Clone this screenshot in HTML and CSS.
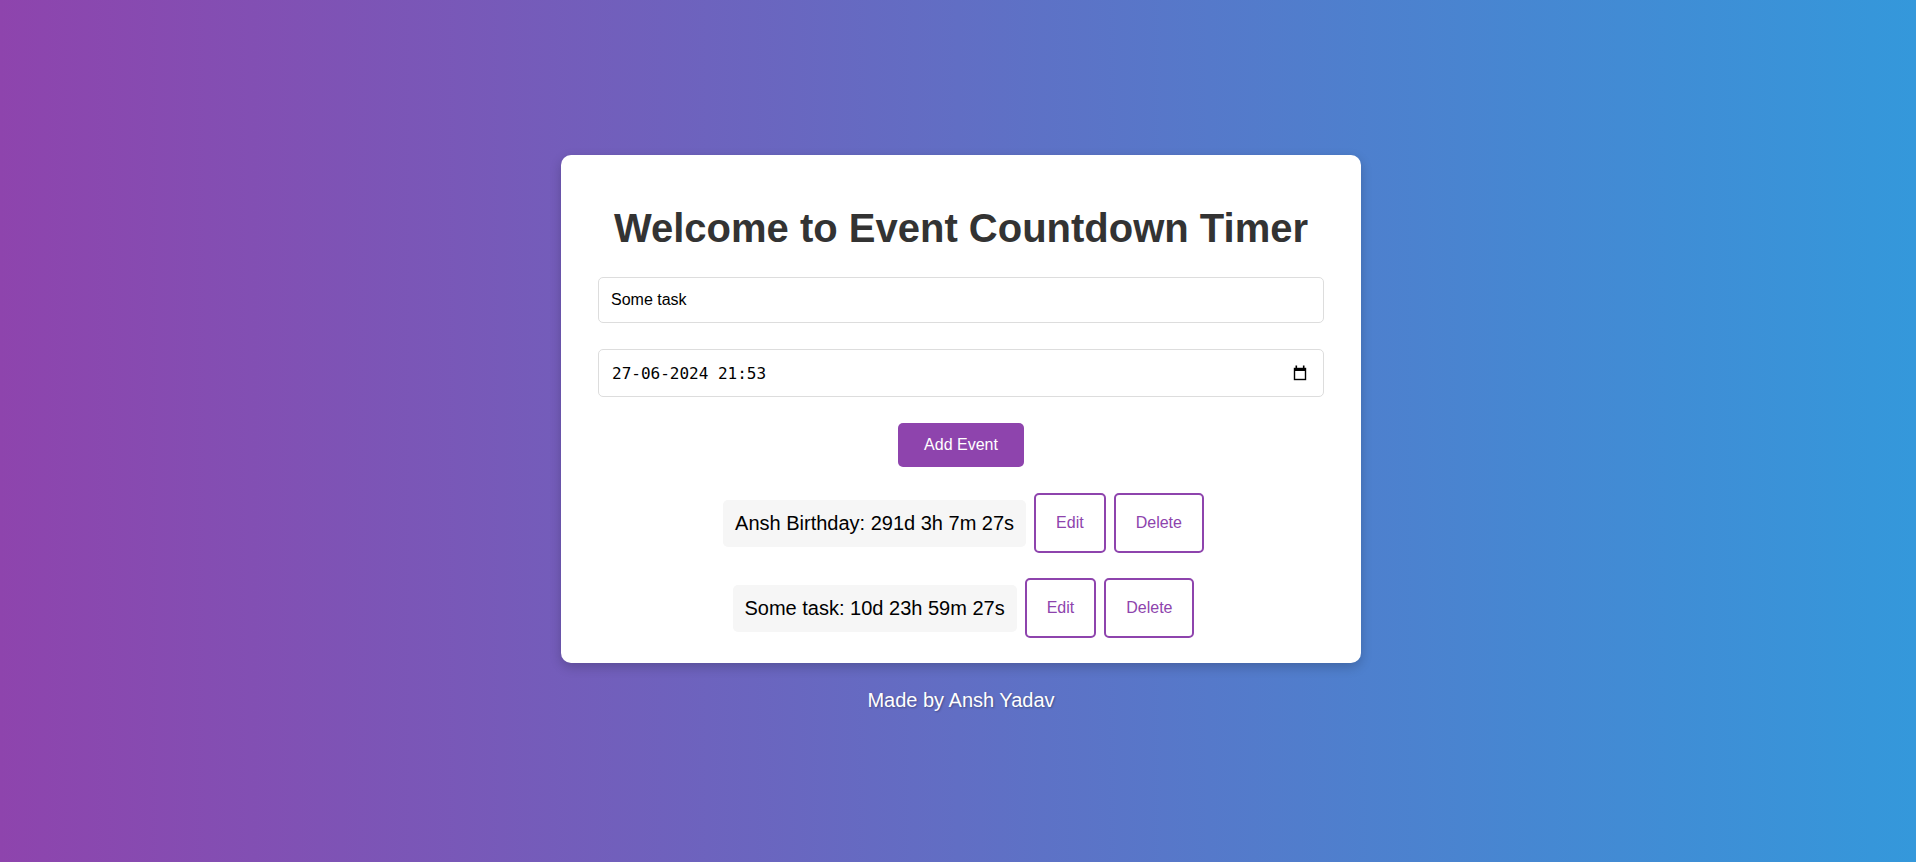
FILE: index.html
```html
<!DOCTYPE html>
<html lang="en">
<head>
<meta charset="utf-8">
<title>Event Countdown Timer</title>
<link rel="stylesheet" href="styles.css">
</head>
<body>
<main class="page">
  <section class="card">
    <h1 class="title">Welcome to Event Countdown Timer</h1>
    <input class="field text-field" type="text" value="Some task">
    <label class="field date-field">
      <input class="date-input" type="text" value="27-06-2024 21:53">
      <svg class="cal-icon" width="14" height="16" viewBox="0 0 14 16" aria-hidden="true">
        <rect x="1.5" y="3.5" width="11" height="11" fill="none" stroke="#000" stroke-width="1.4"/>
        <rect x="1" y="3" width="12" height="3" fill="#000"/>
        <rect x="2.5" y="0.5" width="1.6" height="3" fill="#000"/>
        <rect x="9.9" y="0.5" width="1.6" height="3" fill="#000"/>
      </svg>
    </label>
    <button class="add-btn" type="button">Add Event</button>
    <div class="events">
      <div class="event-row">
        <span class="event-text">Ansh Birthday: 291d 3h 7m 27s</span>
        <button class="outline-btn" type="button">Edit</button>
        <button class="outline-btn" type="button">Delete</button>
      </div>
      <div class="event-row">
        <span class="event-text">Some task: 10d 23h 59m 27s</span>
        <button class="outline-btn" type="button">Edit</button>
        <button class="outline-btn" type="button">Delete</button>
      </div>
    </div>
  </section>
  <footer class="footer">Made by Ansh Yadav</footer>
</main>
</body>
</html>
```

FILE: styles.css
```css
* {
  box-sizing: border-box;
}

html, body {
  margin: 0;
  height: 100%;
}

body {
  font-family: "Liberation Sans", Arial, sans-serif;
  background: linear-gradient(to right, #8e44ad, #3498db);
  color: #000;
}

.page {
  height: 100%;
  padding-left: 6px;
  display: flex;
  flex-direction: column;
  align-items: center;
  justify-content: center;
}

.card {
  width: 800px;
  margin-top: 5px;
  background: #fff;
  border-radius: 10px;
  box-shadow: 0 4px 12px rgba(0, 0, 0, 0.2);
  padding: 20px 37px 25px;
  display: flex;
  flex-direction: column;
  align-items: stretch;
}

.title {
  margin: 30px 0 26px;
  font-size: 40px;
  line-height: 46px;
  font-weight: bold;
  color: #333;
  text-align: center;
}

.field {
  display: flex;
  align-items: center;
  width: 100%;
  border: 1px solid #ddd;
  border-radius: 5px;
  background: #fff;
  padding: 0 12px;
  font-size: 16px;
  color: #000;
}

.text-field {
  height: 46px;
  font-family: "Liberation Sans", Arial, sans-serif;
  outline: none;
}

.date-field {
  height: 48px;
  margin-top: 26px;
  justify-content: space-between;
  padding-left: 13px;
  padding-right: 16px;
}

.date-input {
  border: 0;
  padding: 0;
  outline: none;
  background: transparent;
  font-family: "DejaVu Sans Mono", "Liberation Mono", monospace;
  font-size: 16px;
  color: #000;
  width: 300px;
}

.cal-icon {
  display: block;
  flex: none;
}

.add-btn {
  align-self: center;
  margin-top: 26px;
  width: 126px;
  height: 44px;
  border: 0;
  border-radius: 5px;
  background: #8e44ad;
  color: #fff;
  font-family: "Liberation Sans", Arial, sans-serif;
  font-size: 16px;
  padding: 0;
}

.events {
  display: flex;
  flex-direction: column;
  gap: 25px;
  margin-top: 26px;
}

.event-row {
  display: flex;
  align-items: center;
  justify-content: center;
  gap: 8px;
  padding-left: 5px;
}

.event-text {
  background: #f6f6f6;
  border-radius: 5px;
  padding: 12px;
  font-size: 20px;
  line-height: 23px;
  color: #000;
}

.outline-btn {
  height: 60px;
  padding: 0 20px;
  border: 2px solid #8e44ad;
  border-radius: 5px;
  background: #fff;
  color: #8e44ad;
  font-family: "Liberation Sans", Arial, sans-serif;
  font-size: 16px;
}

.footer {
  margin-top: 26px;
  font-size: 20px;
  line-height: 23px;
  color: #fff;
  text-shadow: 1px 1px 2px rgba(0, 0, 0, 0.3);
}
```
